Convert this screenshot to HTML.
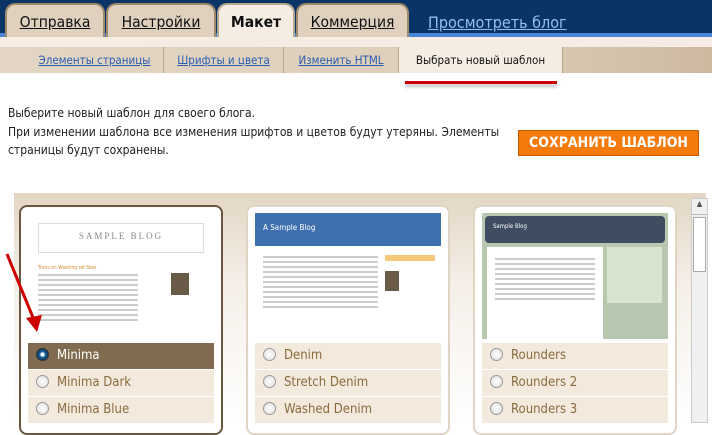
<!DOCTYPE html><html><head><meta charset="utf-8"><style>
*{margin:0;padding:0;box-sizing:border-box}
body{width:712px;height:423px;overflow:hidden;background:#fff;font-family:"DejaVu Sans Condensed","Liberation Sans",sans-serif;position:relative}
.hdr{position:absolute;left:0;top:0;width:712px;height:37px;background:#0a3366}
.hdr .bl{position:absolute;left:0;top:33px;width:712px;height:4px;background:#4a86d8}
.tab{position:absolute;top:3px;height:34px;background:#dfd1bd;border:2px solid #a08a6c;border-bottom:none;border-radius:10px 10px 0 0;font-size:15.5px;color:#111;text-align:center;padding-top:8px}
.tab span{text-decoration:underline}
.tab.on{background:#f5ede3;font-weight:bold;height:35px;border-color:#b8a890}
.strip{position:absolute;left:0;top:37px;width:712px;height:10px;background:#f5ede3}
.sub{position:absolute;left:0;top:47px;width:712px;height:26px;background:linear-gradient(90deg,#e3d6c4,#dccdb8 70%,#cdb9a0)}
.st{position:absolute;top:0;height:26px;font-size:11.5px;color:#2a5db0;text-decoration:underline;padding-top:6px;border-right:1px solid #b9a68c;text-align:center}
.st.on{background:#f5ede3;color:#111;text-decoration:none}
.red{position:absolute;left:405px;top:81px;width:152px;height:3px;background:#c00;box-shadow:0 3px 3px #bbb}
.txt{position:absolute;left:8px;font-size:12px;color:#222}
.btn{position:absolute;left:518px;top:130px;width:181px;height:26px;background:#f57a0c;border:1px solid #c85a00;color:#fff;font-weight:bold;font-size:14px;text-align:center;padding-top:4px}
.panel{position:absolute;left:14px;top:193px;width:692px;height:230px;background:linear-gradient(#e3d6c4,#f5efe8 40%,#fff)}
.card{position:absolute;top:205px;width:204px;height:230px;background:#fff;border:2px solid #e0d4c2;border-radius:8px}
.card.sel{border-color:#6b5640}
.prev{position:absolute;left:7px;top:6px;width:186px;height:126px;background:#fff;overflow:hidden}
.row{position:absolute;left:7px;width:186px;height:26px;background:#f3e9dd;font-size:13px;color:#8a6b3e;padding:5px 0 0 29px}
.row i{position:absolute;left:8px;top:5px;width:13px;height:13px;border-radius:50%;border:1px solid #999;background:radial-gradient(#fff,#ddd)}
.row.s{background:#806a50;color:#fff}
.row.s i{background:radial-gradient(#fff 20%,#1a6aa0 35%,#09396a 70%);border-color:#333}
.l{height:2px;background:#ccc;margin:3px 0}
.sb{position:absolute;left:691px;top:198px;width:17px;height:225px;background:#f0f0f0;border:1px solid #ccc}
</style></head><body>
<div class="hdr"><div class="bl"></div></div>
<div class="tab" style="left:5px;width:100px"><span>Отправка</span></div>
<div class="tab" style="left:106px;width:110px"><span>Настройки</span></div>
<div class="tab on" style="left:217px;width:78px">Макет</div>
<div class="tab" style="left:296px;width:113px"><span>Коммерция</span></div>
<div style="position:absolute;left:428px;top:13px;font-size:16px;color:#8ec0f0;text-decoration:underline">Просмотреть блог</div>
<div class="strip"></div>
<div class="sub">
<div class="st" style="left:0;width:164px;padding-left:26px">Элементы страницы</div>
<div class="st" style="left:164px;width:120px">Шрифты и цвета</div>
<div class="st" style="left:284px;width:115px">Изменить HTML</div>
<div class="st on" style="left:399px;width:164px">Выбрать новый шаблон</div>
</div>
<div class="red"></div>
<div class="txt" style="top:106px">Выберите новый шаблон для своего блога.</div>
<div class="txt" style="top:125px">При изменении шаблона все изменения шрифтов и цветов будут утеряны. Элементы</div>
<div class="txt" style="top:143px">страницы будут сохранены.</div>
<div class="btn">СОХРАНИТЬ ШАБЛОН</div>
<div class="panel"></div>
<div class="card sel" style="left:19px">
<div class="prev"><div style="margin:10px 10px 0;height:30px;border:1px solid #ddd;text-align:center;font:9px 'Liberation Serif',serif;color:#888;padding-top:7px;letter-spacing:2px">SAMPLE BLOG</div>
<div style="margin:12px 0 0 10px;font-size:5px;color:#d88a30">Trons en Washing ref Sbar</div>
<div style="margin:3px 10px;width:100px"><div class="l"></div><div class="l"></div><div class="l"></div><div class="l"></div><div class="l"></div><div class="l"></div><div class="l"></div><div class="l"></div><div class="l"></div><div class="l"></div></div>
<div style="position:absolute;left:143px;top:60px;width:18px;height:22px;background:#6a5a4a"></div></div>
<div class="row s" style="top:136px"><i></i>Minima</div>
<div class="row" style="top:163px"><i></i>Minima Dark</div>
<div class="row" style="top:190px"><i></i>Minima Blue</div>
</div>
<div class="card" style="left:246px">
<div class="prev"><div style="height:33px;background:#3e70b0;color:#fff;font-size:8px;padding:10px 0 0 8px">A Sample Blog</div>
<div style="margin:10px 8px;width:115px"><div class="l"></div><div class="l"></div><div class="l"></div><div class="l"></div><div class="l"></div><div class="l"></div><div class="l"></div><div class="l"></div><div class="l"></div><div class="l"></div><div class="l"></div></div>
<div style="position:absolute;left:130px;top:42px;width:50px;height:6px;background:#f5c87a"></div>
<div style="position:absolute;left:130px;top:58px;width:14px;height:20px;background:#6a5a4a"></div></div>
<div class="row" style="top:136px"><i></i>Denim</div>
<div class="row" style="top:163px"><i></i>Stretch Denim</div>
<div class="row" style="top:190px"><i></i>Washed Denim</div>
</div>
<div class="card" style="left:473px">
<div class="prev" style="background:#b8c8b0"><div style="margin:3px;height:27px;background:#3e4e60;color:#fff;font-size:6px;padding:7px 0 0 8px;border-radius:4px">Sample Blog</div>
<div style="position:absolute;left:5px;top:34px;width:116px;height:92px;background:#fff;padding:8px"><div class="l"></div><div class="l"></div><div class="l"></div><div class="l"></div><div class="l"></div><div class="l"></div><div class="l"></div><div class="l"></div><div class="l"></div></div>
<div style="position:absolute;left:125px;top:34px;width:55px;height:56px;background:#d8e4d0"></div></div>
<div class="row" style="top:136px"><i></i>Rounders</div>
<div class="row" style="top:163px"><i></i>Rounders 2</div>
<div class="row" style="top:190px"><i></i>Rounders 3</div>
</div>
<div class="sb"><div style="height:16px;border-bottom:1px solid #bbb;font-size:8px;text-align:center;color:#555">▲</div><div style="margin:2px 1px;height:55px;background:#fff;border:1px solid #aaa"></div></div>
<svg style="position:absolute;left:0;top:0" width="712" height="423"><line x1="7" y1="254" x2="34" y2="320" stroke="#c00" stroke-width="3"/><polygon points="26,318 42,315 37,332" fill="#c00"/></svg>
</body></html>
